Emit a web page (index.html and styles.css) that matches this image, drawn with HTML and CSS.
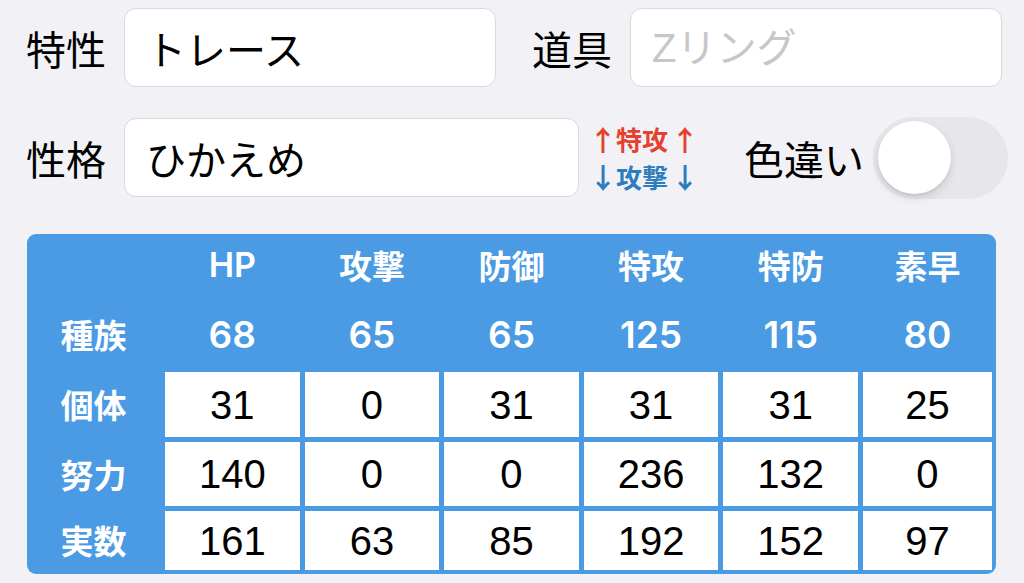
FILE: index.html
```html
<!DOCTYPE html>
<html lang="ja">
<head>
<meta charset="utf-8">
<title>ステータス</title>
<link rel="stylesheet" href="styles.css">
</head>
<body>
<div class="page">
  <div class="row row-top">
    <div class="label">特性</div>
    <div class="field field-ability"><span class="value">トレース</span></div>
    <div class="label label-item">道具</div>
    <div class="field field-item"><span class="placeholder">Zリング</span></div>
  </div>
  <div class="row row-nature">
    <div class="label">性格</div>
    <div class="field field-nature"><span class="value">ひかえめ</span></div>
    <div class="mods">
      <div class="mod mod-up"><span class="arrow arrow-l">↑</span><span class="stat">特攻</span><span class="arrow arrow-r">↑</span></div>
      <div class="mod mod-down"><span class="arrow arrow-l">↓</span><span class="stat">攻撃</span><span class="arrow arrow-r">↓</span></div>
    </div>
    <div class="label label-shiny">色違い</div>
    <div class="switch"><div class="knob"></div></div>
  </div>
  <div class="stats">
    <div class="th"></div>
    <div class="th latin">HP</div>
    <div class="th">攻撃</div>
    <div class="th">防御</div>
    <div class="th">特攻</div>
    <div class="th">特防</div>
    <div class="th">素早</div>

    <div class="rh">種族</div>
    <div class="base">68</div>
    <div class="base">65</div>
    <div class="base">65</div>
    <div class="base">125</div>
    <div class="base">115</div>
    <div class="base">80</div>

    <div class="rh">個体</div>
    <div class="cell">31</div>
    <div class="cell">0</div>
    <div class="cell">31</div>
    <div class="cell">31</div>
    <div class="cell">31</div>
    <div class="cell">25</div>

    <div class="rh">努力</div>
    <div class="cell">140</div>
    <div class="cell">0</div>
    <div class="cell">0</div>
    <div class="cell">236</div>
    <div class="cell">132</div>
    <div class="cell">0</div>

    <div class="rh">実数</div>
    <div class="cell">161</div>
    <div class="cell">63</div>
    <div class="cell">85</div>
    <div class="cell">192</div>
    <div class="cell">152</div>
    <div class="cell">97</div>
  </div>
</div>
</body>
</html>
```
FILE: styles.css
```css
html, body {
  margin: 0;
  padding: 0;
}
body {
  width: 1024px;
  height: 583px;
  overflow: hidden;
  background: #f1f1f6;
  font-family: "Noto Sans CJK JP", "Liberation Sans", sans-serif;
  color: #000;
}
.page {
  padding: 8px 0 0 26px;
}
.row {
  display: flex;
  align-items: center;
  height: 79px;
}
.row-nature {
  margin-top: 31px;
}
.label {
  font-size: 40px;
  line-height: 1;
  width: 80px;
  flex: none;
  white-space: nowrap;
}
.label-item {
  margin-left: 36px;
}
.label-shiny {
  width: 120px;
  margin-left: 47px;
}
.field {
  height: 79px;
  box-sizing: border-box;
  margin-left: 18px;
  background: #fff;
  border: 1px solid #d9d9de;
  border-radius: 12px;
  display: flex;
  align-items: center;
  padding-left: 21px;
  font-size: 40px;
  line-height: 1;
  flex: none;
}
.field-ability { width: 372px; }
.field-item { width: 372px; }
.field-nature { width: 455px; }
.placeholder {
  color: #c6c6cb;
  font-family: "Liberation Sans", "Noto Sans CJK JP", sans-serif;
}
.mods {
  margin-left: 10px;
  display: flex;
  flex-direction: column;
  font-weight: 700;
  width: 108px;
  flex: none;
  white-space: nowrap;
}
.mod {
  display: flex;
  align-items: center;
  height: 38px;
  line-height: 1;
}
.stat {
  font-size: 26px;
}
.arrow {
  display: inline-block;
  width: 18px;
  text-align: center;
  font-family: "Noto Sans CJK JP", sans-serif;
  font-weight: 700;
  font-size: 28px;
}
.arrow-l { margin-right: 9px; }
.arrow-r { margin-left: 3px; }
.mod-up { color: #e5412f; }
.mod-down { color: #2b7dbb; }
.switch {
  margin-left: 9px;
  width: 135px;
  height: 82px;
  border-radius: 41px;
  background: #e6e6eb;
  flex: none;
  display: flex;
  align-items: center;
  padding-left: 5px;
  box-sizing: border-box;
}
.knob {
  width: 73px;
  height: 73px;
  border-radius: 50%;
  background: #fff;
  box-shadow: 0 4px 10px rgba(0, 0, 0, 0.12), 0 2px 2px rgba(0, 0, 0, 0.05);
}
.stats {
  margin-top: 37px;
  margin-left: 1px;
  width: 969px;
  box-sizing: border-box;
  background: #4a9ae4;
  border-radius: 9px;
  padding: 0 4px 4px 0;
  display: grid;
  grid-template-columns: 133px repeat(5, 134.6px) 129px;
  grid-template-rows: 62px 66px 65px 64px 59px;
  column-gap: 5px;
  row-gap: 5px;
}
.th, .rh, .base, .cell {
  display: flex;
  align-items: center;
  justify-content: center;
  line-height: 1;
}
.th {
  color: #fff;
  font-weight: 700;
  font-size: 33px;
}
.th.latin {
  font-family: "Inter", "Liberation Sans", sans-serif;
  font-weight: 600;
  font-size: 34px;
}
.rh {
  color: #fff;
  font-weight: 700;
  font-size: 33px;
}
.base {
  color: #fff;
  font-weight: 600;
  font-family: "Inter", "Liberation Sans", sans-serif;
  font-size: 37px;
}
.cell {
  background: #fff;
  font-family: "Liberation Sans", sans-serif;
  font-size: 40px;
}
```
